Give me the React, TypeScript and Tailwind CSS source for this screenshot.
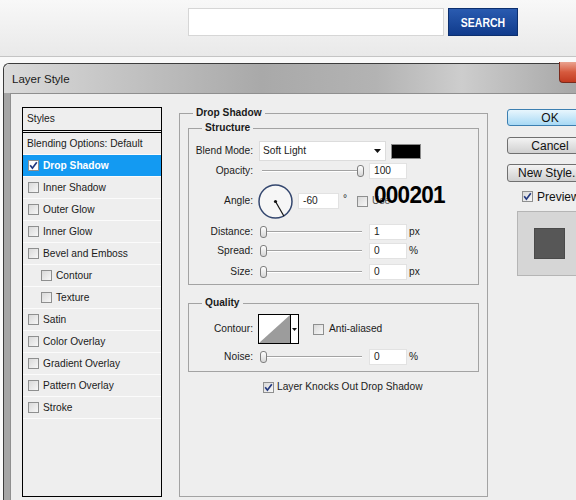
import React from "react";

function Box({ checked = false, white = false }: { checked?: boolean; white?: boolean }) {
  return (
    <span
      className={`flex h-[11px] w-[11px] shrink-0 items-center justify-center border border-[#8e8f8f] ${
        white ? "bg-white" : "bg-linear-to-br from-[#d9d9d9] to-[#f7f7f7]"
      }`}
    >
      {checked && (
        <svg width="9" height="9" viewBox="0 0 9 9">
          <path d="M1.2 4.3 L3.4 7.2 L7.8 1.2" fill="none" stroke="#22387f" strokeWidth="1.7" />
        </svg>
      )}
    </span>
  );
}

function StyleRow({ label, checked, selected, indent }: { label: string; checked?: boolean; selected?: boolean; indent?: boolean }) {
  return (
    <div
      className={`flex h-[22px] items-center border-b border-[#fbfbfb] ${indent ? "pl-[18px]" : "pl-[5px]"} ${
        selected ? "bg-[#139af2] font-bold text-white" : "text-[#1b1b1b]"
      }`}
    >
      <Box checked={checked} white={selected} />
      <span className="ml-[4px]">{label}</span>
    </div>
  );
}

function Slider({ at }: { at: number }) {
  return (
    <div className="relative ml-[5px] h-[12px] w-[108px] shrink-0">
      <div className="absolute left-[4px] right-[4px] top-[5px] h-[2px] border-t border-b border-t-[#a3a3a3] border-b-white" />
      <div
        className="absolute top-0 h-[12px] w-[7px] rounded-[3px] border border-[#7f7f7f] bg-linear-to-b from-white to-[#d6d6d6]"
        style={{ left: at - 3.5 }}
      />
    </div>
  );
}

function Field({ value, w = "w-[38px]", ml = "ml-[3px]" }: { value: string; w?: string; ml?: string }) {
  return (
    <div className={`${ml} ${w} flex h-[16px] shrink-0 items-center border border-[#e2e2e2] bg-white pl-[4px] text-[#1b1b1b]`}>
      {value}
    </div>
  );
}

function Label({ children }: { children: React.ReactNode }) {
  return <span className="w-[64px] shrink-0 text-right text-[#1b1b1b]">{children}</span>;
}

export default function App() {
  const styles: { label: string; checked?: boolean; selected?: boolean; indent?: boolean }[] = [
    { label: "Drop Shadow", checked: true, selected: true },
    { label: "Inner Shadow" },
    { label: "Outer Glow" },
    { label: "Inner Glow" },
    { label: "Bevel and Emboss" },
    { label: "Contour", indent: true },
    { label: "Texture", indent: true },
    { label: "Satin" },
    { label: "Color Overlay" },
    { label: "Gradient Overlay" },
    { label: "Pattern Overlay" },
    { label: "Stroke" },
  ];

  return (
    <div className="h-[500px] w-[576px] overflow-hidden bg-[#f9f9f9] font-['Liberation_Sans',Arial,sans-serif] text-[10.2px] leading-[12px]">
      {/* site header */}
      <div className="flex h-[57px] items-start border-b border-[#c4c4c4] bg-linear-to-b from-[#f8f8f8] to-[#e9e9e9] pl-[188px] pt-[8px]">
        <div className="h-[28px] w-[256px] border border-[#d6d6d6] bg-white" />
        <div className="ml-[4px] flex h-[28px] w-[70px] items-center justify-center border border-[#0c2f6e] bg-linear-to-b from-[#2a5bb0] to-[#103b8c] text-[10.5px] font-bold text-white">
          <span className="inline-block scale-y-[1.3]">SEARCH</span>
        </div>
      </div>
      <div className="h-[6px]" />

      {/* dialog */}
      <div className="ml-[3px] rounded-tl-[6px] border-l border-t border-[#3c3c3c]">
        <div className="flex h-[29px] items-center rounded-tl-[6px] bg-[linear-gradient(to_right,#dadada,#c4c4c4_20%,#a9a9a9_45%,#b3b3b3_65%,#cdcdcd_80%,#a7a7a7)]">
          <span className="pl-[8px] text-[11.5px] text-[#1a1a1a]">Layer Style</span>
          <div className="-mt-[2px] ml-auto h-[21px] w-[17px] self-start rounded-bl-[4px] border-b border-l border-[#7a2a1c] bg-linear-to-b from-[#e9a28f] via-[#d65a3e] to-[#c23a20]" />
        </div>

        <div className="flex h-[407px]">
          <div className="w-[6px] shrink-0 bg-[#a5a5a5]" />
          <div className="flex flex-1 items-start border-l border-t border-[#8f8f8f] bg-[#eeeeee] pl-[11px] pt-[13px]">
            {/* styles list */}
            <div className="h-[390px] w-[140px] shrink-0 border border-black bg-[#eeeeee]">
              <div className="flex h-[25px] items-center border-b-[3px] border-double border-black pl-[4px] text-[#1b1b1b]">Styles</div>
              <div className="flex h-[22px] items-center border-b border-[#fbfbfb] pl-[4px] text-[#1b1b1b]">Blending Options: Default</div>
              {styles.map((s) => (
                <StyleRow key={s.label} {...s} />
              ))}
            </div>

            {/* drop shadow group */}
            <fieldset className="ml-[17px] h-[390px] w-[309px] shrink-0 border border-[#a3a3a3]">
              <legend className="ml-[13px] px-[3px] font-bold text-[#1b1b1b]">Drop Shadow</legend>

              <fieldset className="ml-[8px] mt-[3px] w-[291px] border border-[#a3a3a3] pb-[2px] pt-[6px]">
                <legend className="ml-[13px] px-[3px] font-bold text-[#1b1b1b]">Structure</legend>

                <div className="flex h-[22px] items-center">
                  <Label>Blend Mode:</Label>
                  <div className="ml-[6px] flex h-[20px] w-[127px] shrink-0 items-center justify-between border border-[#dcdcdc] bg-white pl-[3px] pr-[4px] text-[#1b1b1b]">
                    <span>Soft Light</span>
                    <svg width="7" height="4" viewBox="0 0 7 4">
                      <path d="M0 0 H7 L3.5 4 Z" fill="#111" />
                    </svg>
                  </div>
                  <div className="ml-[5px] h-[15px] w-[30px] shrink-0 border border-[#8a8a8a] bg-black" />
                </div>

                <div className="flex h-[18px] items-center">
                  <Label>Opacity:</Label>
                  <Slider at={102} />
                  <Field value="100" />
                </div>

                <div className="flex h-[42px] items-center">
                  <Label>Angle:</Label>
                  <svg className="ml-[5px] shrink-0" width="35" height="35" viewBox="0 0 35 35">
                    <circle cx="17.5" cy="17.5" r="16.5" fill="#f6f6f6" stroke="#34476f" strokeWidth="1.5" />
                    <line x1="17.5" y1="17.5" x2="26" y2="32.2" stroke="#111" strokeWidth="1.2" />
                    <circle cx="17.5" cy="17.5" r="1.6" fill="#111" />
                  </svg>
                  <Field value="-60" w="w-[41px]" ml="ml-[5px]" />
                  <span className="ml-[4px] -mt-[4px] text-[#1b1b1b]">°</span>
                  <span className="ml-[10px]">
                    <Box />
                  </span>
                  <span className="relative ml-[4px] text-[#555]">
                    Use
                    <span className="absolute -top-[12px] left-[2px] inline-block origin-left scale-x-[0.94] text-[24px] leading-[24px] font-bold tracking-[-0.8px] text-black">
                      000201
                    </span>
                  </span>
                </div>

                <div className="flex h-[19px] items-center">
                  <Label>Distance:</Label>
                  <Slider at={5} />
                  <Field value="1" />
                  <span className="ml-[2px] text-[#1b1b1b]">px</span>
                </div>
                <div className="flex h-[20px] items-center">
                  <Label>Spread:</Label>
                  <Slider at={5} />
                  <Field value="0" />
                  <span className="ml-[2px] text-[#1b1b1b]">%</span>
                </div>
                <div className="flex h-[21px] items-center">
                  <Label>Size:</Label>
                  <Slider at={5} />
                  <Field value="0" />
                  <span className="ml-[2px] text-[#1b1b1b]">px</span>
                </div>
              </fieldset>

              <fieldset className="ml-[8px] mt-[12px] w-[291px] border border-[#a3a3a3] pb-[3px] pt-[3px]">
                <legend className="ml-[13px] px-[3px] font-bold text-[#1b1b1b]">Quality</legend>
                <div className="flex h-[34px] items-center">
                  <Label>Contour:</Label>
                  <div className="ml-[5px] flex h-[30px] w-[41px] shrink-0 border border-black bg-white">
                    <svg width="31" height="28" viewBox="0 0 31 28" className="shrink-0">
                      <path d="M0 28 L31 0 L31 28 Z" fill="#9c9c9c" />
                    </svg>
                    <div className="flex flex-1 items-center justify-center border-l border-black">
                      <svg width="5" height="3" viewBox="0 0 5 3">
                        <path d="M0 0 H5 L2.5 3 Z" fill="#111" />
                      </svg>
                    </div>
                  </div>
                  <span className="ml-[14px]">
                    <Box />
                  </span>
                  <span className="ml-[5px] text-[#1b1b1b]">Anti-aliased</span>
                </div>
                <div className="flex h-[22px] items-center">
                  <Label>Noise:</Label>
                  <Slider at={5} />
                  <Field value="0" />
                  <span className="ml-[2px] text-[#1b1b1b]">%</span>
                </div>
              </fieldset>

              <div className="ml-[83px] mt-[9px] flex h-[12px] items-center">
                <Box checked />
                <span className="ml-[3px] text-[#1b1b1b]">Layer Knocks Out Drop Shadow</span>
              </div>
            </fieldset>

            {/* buttons */}
            <div className="ml-[19px] w-[86px] shrink-0 text-[12px] leading-[14px] text-[#111]">
              <div className="mt-[2px] flex h-[17px] items-center justify-center rounded-[3px] border border-[#3c7fb1] bg-linear-to-b from-[#e8f6fd] to-[#a7d9f5]">
                OK
              </div>
              <div className="mt-[11px] flex h-[17px] items-center justify-center rounded-[3px] border border-[#707070] bg-linear-to-b from-[#f3f3f3] to-[#d0d0d0]">
                Cancel
              </div>
              <div className="mt-[10px] flex h-[18px] items-center justify-center rounded-[3px] border border-[#707070] bg-linear-to-b from-[#f3f3f3] to-[#d0d0d0]">
                New Style...
              </div>
              <div className="ml-[15px] mt-[8px] flex h-[13px] items-center">
                <Box checked />
                <span className="ml-[4px]">Preview</span>
              </div>
              <div className="ml-[10px] mt-[8px] h-[65px] w-[80px] border border-[#b5b5b5] bg-[#d6d6d6] pl-[16px] pt-[16px]">
                <div className="h-[31px] w-[31px] border border-[#4a4a4a] bg-[#575757]" />
              </div>
            </div>
          </div>
        </div>
      </div>
    </div>
  );
}
